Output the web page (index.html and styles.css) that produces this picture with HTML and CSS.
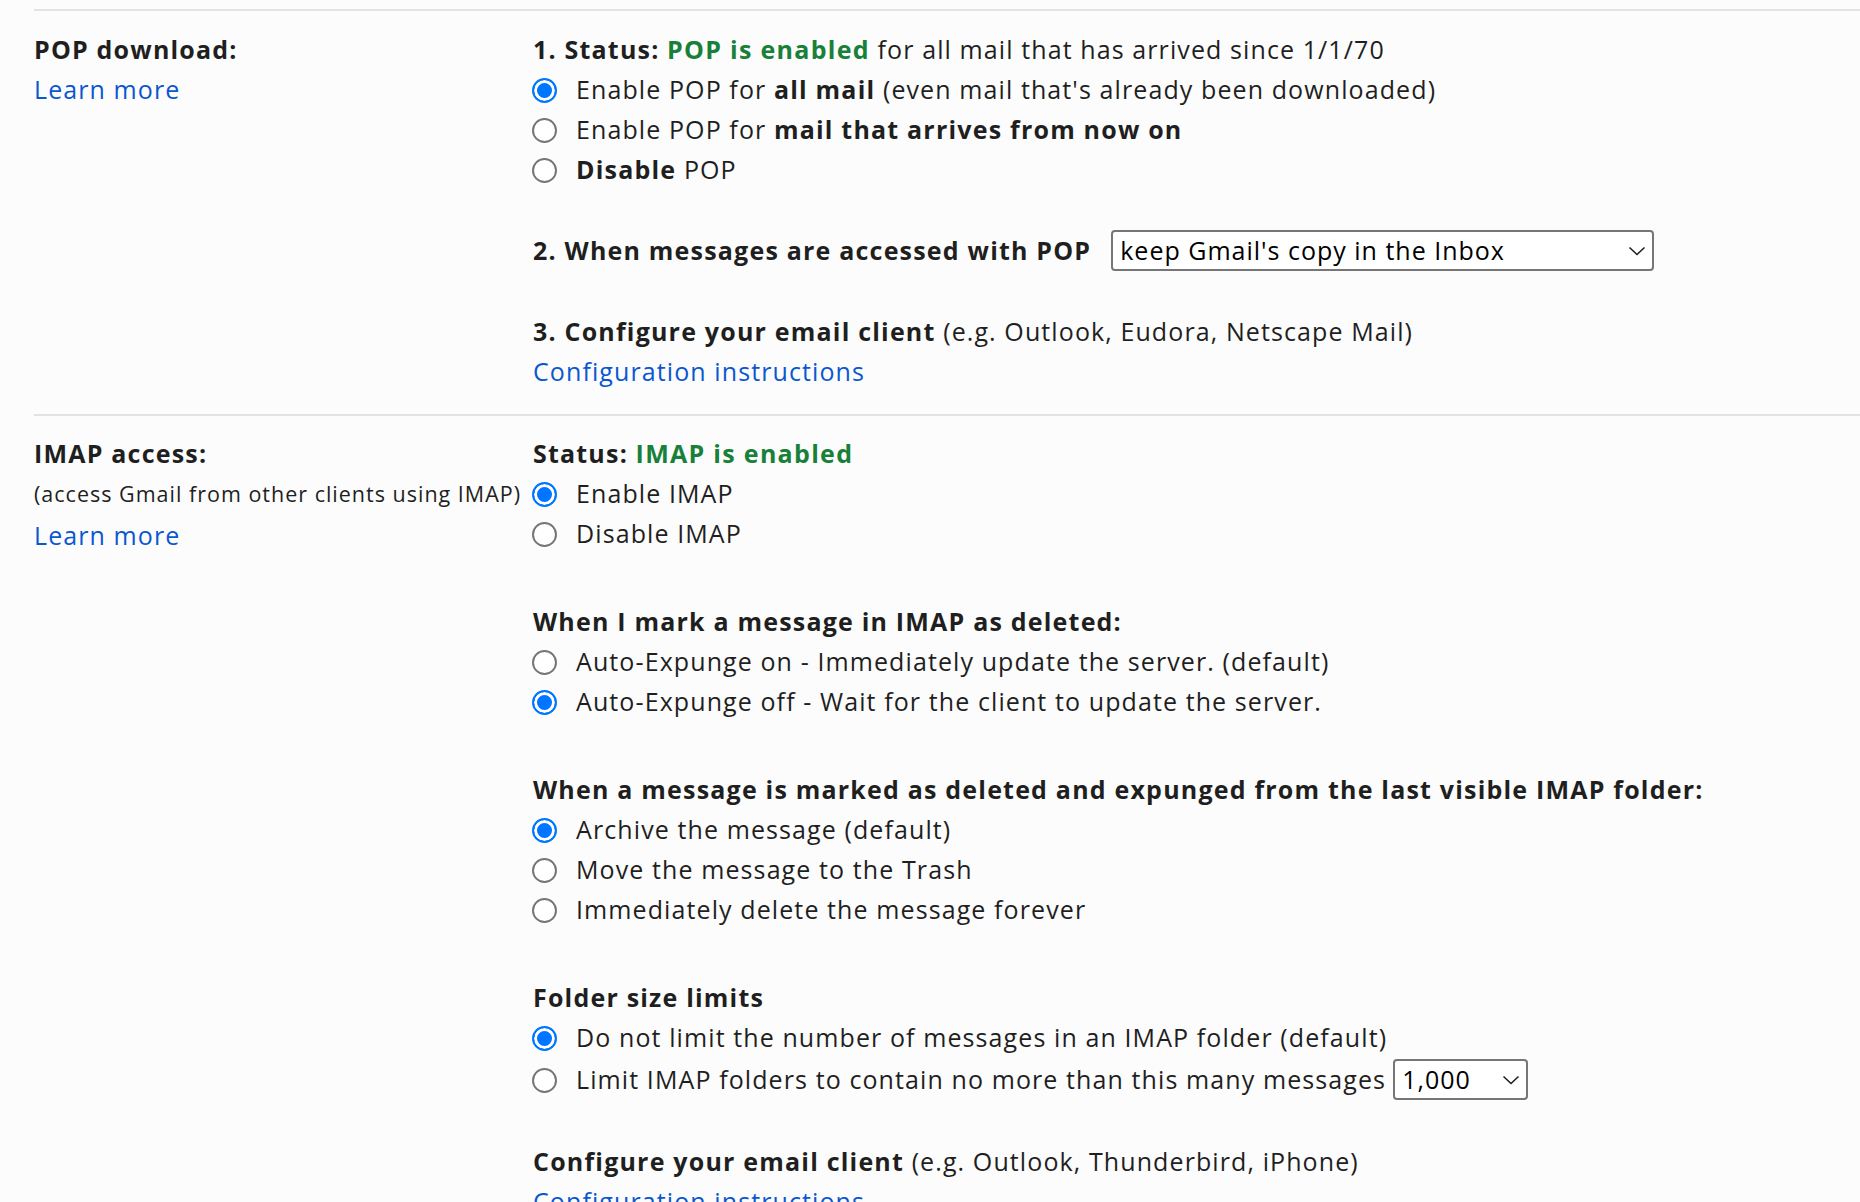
FILE: index.html
```html
<!DOCTYPE html>
<html lang="en">
    <head>
        <meta charset="UTF-8">
        <title>Forwarding and POP/IMAP</title>
        <link rel="stylesheet" href="styles.css">
    </head>
    <body>

        <div class="setting">
            <div class="label-cell">
                <div class="line label">POP download:</div>
                <div class="line"><a class="link" href="#">Learn more</a></div>
            </div>
            <div class="content-cell">
                <div class="group">
                    <div class="line"><b>1. Status:</b> <span class="ok">POP is enabled</span> for all mail that has arrived since 1/1/70</div>
                    <label class="option"><input type="radio" name="pop" checked> <span>Enable POP for <b>all mail</b> (even mail that's already been downloaded)</span></label>
                    <label class="option"><input type="radio" name="pop"> <span>Enable POP for <b>mail that arrives from now on</b></span></label>
                    <label class="option"><input type="radio" name="pop"> <span><b>Disable</b> POP</span></label>
                </div>
                <div class="group">
                    <div class="select-line">
                        <b>2. When messages are accessed with POP</b>
                        <div class="select-wrap wide">
                            <select>
                                <option>keep Gmail's copy in the Inbox</option>
                                <option>mark Gmail's copy as read</option>
                                <option>archive Gmail's copy</option>
                                <option>delete Gmail's copy</option>
                            </select>
                            <svg class="chevron" width="18" height="10" viewBox="0 0 18 10"><path d="M1.5 1.5 L9 8.5 L16.5 1.5" fill="none" stroke="#1f1f1f" stroke-width="1.6"/></svg>
                        </div>
                    </div>
                </div>
                <div class="group">
                    <div class="line"><b>3. Configure your email client</b> (e.g. Outlook, Eudora, Netscape Mail)</div>
                    <div class="line"><a class="link" href="#">Configuration instructions</a></div>
                </div>
            </div>
        </div>

        <div class="setting">
            <div class="label-cell">
                <div class="line label">IMAP access:</div>
                <div class="line small">(access Gmail from other clients using IMAP)</div>
                <div class="line"><a class="link" href="#">Learn more</a></div>
            </div>
            <div class="content-cell">
                <div class="group">
                    <div class="line"><b>Status:</b> <span class="ok">IMAP is enabled</span></div>
                    <label class="option"><input type="radio" name="imap" checked> <span>Enable IMAP</span></label>
                    <label class="option"><input type="radio" name="imap"> <span>Disable IMAP</span></label>
                </div>
                <div class="group spaced">
                    <div class="line"><b>When I mark a message in IMAP as deleted:</b></div>
                    <label class="option"><input type="radio" name="expunge"> <span>Auto-Expunge on - Immediately update the server. (default)</span></label>
                    <label class="option"><input type="radio" name="expunge" checked> <span>Auto-Expunge off - Wait for the client to update the server.</span></label>
                </div>
                <div class="group spaced">
                    <div class="line"><b>When a message is marked as deleted and expunged from the last visible IMAP folder:</b></div>
                    <label class="option"><input type="radio" name="deleted" checked> <span>Archive the message (default)</span></label>
                    <label class="option"><input type="radio" name="deleted"> <span>Move the message to the Trash</span></label>
                    <label class="option"><input type="radio" name="deleted"> <span>Immediately delete the message forever</span></label>
                </div>
                <div class="group spaced">
                    <div class="line"><b>Folder size limits</b></div>
                    <label class="option"><input type="radio" name="limit" checked> <span>Do not limit the number of messages in an IMAP folder (default)</span></label>
                    <label class="option tall"><input type="radio" name="limit"> <span>Limit IMAP folders to contain no more than this many messages</span>
                        <div class="select-wrap narrow">
                            <select>
                                <option>1,000</option>
                                <option>2,000</option>
                                <option>5,000</option>
                                <option>10,000</option>
                            </select>
                            <svg class="chevron" width="18" height="10" viewBox="0 0 18 10"><path d="M1.5 1.5 L9 8.5 L16.5 1.5" fill="none" stroke="#1f1f1f" stroke-width="1.6"/></svg>
                        </div>
                    </label>
                </div>
                <div class="group">
                    <div class="line"><b>Configure your email client</b> (e.g. Outlook, Thunderbird, iPhone)</div>
                    <div class="line"><a class="link" href="#">Configuration instructions</a></div>
                </div>
            </div>
        </div>

    </body>
</html>
```

FILE: styles.css
```css
body {
    font-family: 'Open Sans', 'Roboto', sans-serif;
    font-size: 25px;
    letter-spacing: 1.1px;
    color: #1f1f1f;
    margin: 0;
    padding: 9px 0 0 34px;
    background-color: #fcfcfc;
    overflow: hidden;
}
b {
    font-weight: 700;
    letter-spacing: 1.2px;
}
.setting {
    display: grid;
    grid-template-columns: 499px 1fr;
    border-top: 2px solid #e3e3e3;
    padding: 18px 0 23px;
}
.setting + .setting {
    padding-top: 17px;
}
.line {
    line-height: 40px;
    white-space: nowrap;
}
.label {
    font-weight: 700;
    letter-spacing: 1.2px;
}
.small {
    font-size: 21.5px;
    letter-spacing: 1px;
    line-height: 42px;
}
.link {
    color: #0b57d0;
    text-decoration: none;
}
.ok {
    color: #188038;
    font-weight: 700;
    letter-spacing: 1.3px;
}
.group + .group {
    margin-top: 40px;
}
.group.spaced {
    margin-top: 48px;
}
.option {
    display: flex;
    align-items: center;
    gap: 19px;
    height: 40px;
    white-space: nowrap;
}
.option.tall {
    height: 44px;
    gap: 0;
}
.option.tall span {
    margin: 0 7px 0 19px;
}
input[type="radio"] {
    appearance: none;
    -webkit-appearance: none;
    width: 25px;
    height: 25px;
    margin: 2px 0 0 -1px;
    border: 2px solid #767676;
    border-radius: 50%;
    background-color: #ffffff;
    flex: none;
}
input[type="radio"]:checked {
    border: 2.5px solid #0075ff;
    background-color: #0075ff;
    box-shadow: inset 0 0 0 3px #ffffff;
}
.select-line {
    display: flex;
    align-items: center;
    gap: 20px;
    height: 42px;
    white-space: nowrap;
}
.select-wrap {
    position: relative;
    height: 41px;
}
.select-wrap select {
    appearance: none;
    -webkit-appearance: none;
    font-family: inherit;
    font-size: 25px;
    letter-spacing: 1px;
    color: #000000;
    height: 41px;
    border: 2px solid #767676;
    border-radius: 4px;
    background-color: #ffffff;
    padding: 0 36px 0 7px;
}
.wide select {
    width: 543px;
}
.narrow select {
    width: 135px;
}
.chevron {
    position: absolute;
    right: 8px;
    top: 16px;
    pointer-events: none;
}
```
